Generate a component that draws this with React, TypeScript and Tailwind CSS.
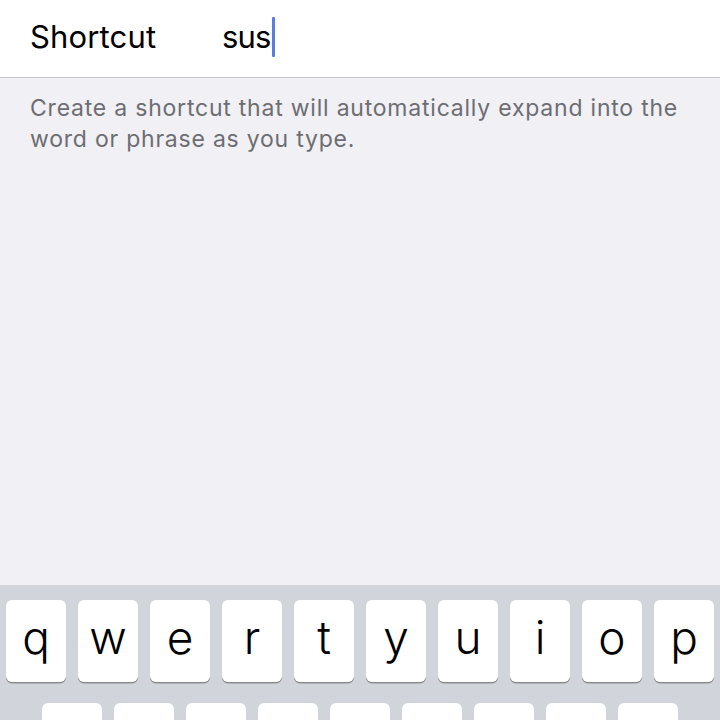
import React from "react";

const row1 = ["q", "w", "e", "r", "t", "y", "u", "i", "o", "p"];
const row2 = ["a", "s", "d", "f", "g", "h", "j", "k", "l"];

function Key({ k }: { k: string }) {
  return (
    <div className="w-[60px] h-[82px] shrink-0 rounded-[6px] bg-white shadow-[0_1.5px_0_#8a8b8f] flex items-center justify-center">
      <span className="text-[46px] font-light leading-none text-black -mt-[8px]">{k}</span>
    </div>
  );
}

export default function App() {
  return (
    <div
      className="w-[720px] h-[720px] overflow-hidden flex flex-col bg-[#f0f0f5]"
      style={{ fontFamily: "Inter, 'Noto Sans', sans-serif" }}
    >
      <div className="h-[78px] shrink-0 bg-white border-b border-[#c8c7cc] flex items-center pl-[30px] pb-[3px]">
        <span className="text-[31px] text-black w-[192px] tracking-[0.15px]">Shortcut</span>
        <span className="text-[31px] text-black tracking-[-0.8px]">sus</span>
        <span className="w-[3px] h-[40px] bg-[#5b7ce4] rounded-[1px] ml-[1px]" />
      </div>
      <div className="flex-1 px-[30px] pt-[15px]">
        <p className="text-[23px] leading-[31px] text-[#6d6d72] tracking-[0.78px] whitespace-nowrap">
          Create a shortcut that will automatically expand into the
          <br />
          word or phrase as you type.
        </p>
      </div>
      <div className="h-[135px] shrink-0 bg-[#d1d4da] pt-[15px] flex flex-col gap-[21px]">
        <div className="flex gap-[12px] px-[6px]">
          {row1.map((k) => (
            <Key key={k} k={k} />
          ))}
        </div>
        <div className="flex gap-[12px] pl-[42px]">
          {row2.map((k) => (
            <Key key={k} k={k} />
          ))}
        </div>
      </div>
    </div>
  );
}
